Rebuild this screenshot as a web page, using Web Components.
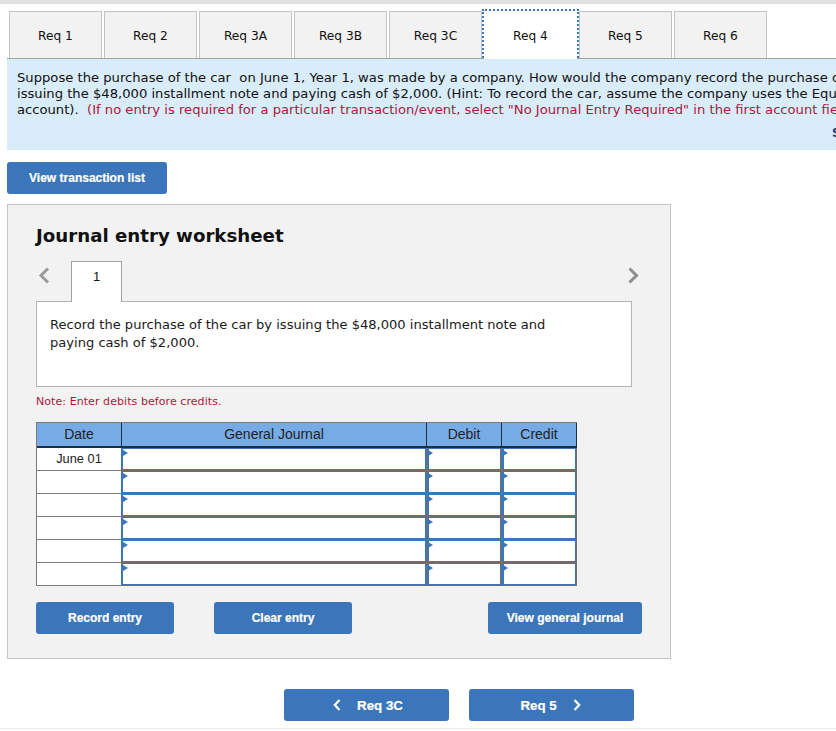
<!DOCTYPE html>
<html><head><meta charset="utf-8">
<style>
html,body{margin:0;padding:0;background:#fff;overflow:hidden;width:836px;height:731px}
body{font-family:"DejaVu Sans",Verdana,sans-serif;font-size:13px;color:#111}
</style></head><body>
<req-app></req-app>
<script>
function def(name,css,html,init){
  customElements.define(name,class extends HTMLElement{
    constructor(){super();const s=this.attachShadow({mode:'open'});s.innerHTML='<style>'+css+'</style>'+html;}
    connectedCallback(){if(init)init(this,this.shadowRoot);}
  });
}
const chev=(d)=>`<svg width="8" height="12" viewBox="0 0 8 12" fill="none" stroke="#fff" stroke-width="2.2"><path d="${d==='l'?'M6.5 1 L1.8 6 L6.5 11':'M1.5 1 L6.2 6 L1.5 11'}"/></svg>`;

def('req-tab',`
:host{display:flex;align-items:center;justify-content:center;box-sizing:border-box;width:93px;height:47px;margin-left:2px;padding-top:1px;background:#f2f2f2;border:1px solid #c4c4c4;border-bottom:0;font:12.2px "DejaVu Sans",Verdana,sans-serif;color:#111}
:host(:first-child){margin-left:0}
:host([active]){background:#fff;outline:2px dotted #3b76ba;outline-offset:0;border-color:#fff;position:relative;height:48px;margin-bottom:-1px;padding-top:0}
`,`<slot></slot>`);

def('req-tabs',`
:host{display:flex;border-bottom:1px solid #a3a3a3;margin-left:7px;padding-left:2px;width:960px}
`,`<slot></slot>`);

def('req-btn',`
:host{display:flex;align-items:center;justify-content:center;gap:16px;box-sizing:border-box;height:32px;background:#3b76ba;color:#fff;border-radius:3px;font:bold 12px "Liberation Sans",Arial,sans-serif;-webkit-text-stroke:.2px #fff}
:host([big]){font-size:13.3px;width:165px}
:host([prev]){padding-left:3px}
:host([next]){padding-right:2px}
`,`<slot></slot>`);

def('req-panel',`
:host{display:block;box-sizing:border-box;height:91px;width:960px;margin-left:7px;background:#d9ecfa;padding:11px 10px 0;font:13.15px/16px "DejaVu Sans",Verdana,sans-serif;color:#111;position:relative}
.s{position:absolute;left:825px;top:66px;color:#1b3a73;font-weight:bold;font-size:12px}
p{margin:0;white-space:nowrap}
i{font-style:normal;color:#b0173a}
`,`<p>Suppose the purchase of the car&nbsp; on June 1, Year 1, was made by a company. How would the company record the purchase of</p>
<p>issuing the $48,000 installment note and paying cash of $2,000. (Hint: To record the car, assume the company uses the Equipment</p>
<p>account).&nbsp; <i>(If no entry is required for a particular transaction/event, select "No Journal Entry Required" in the first account field.)</i></p>
<span class="s">S</span>`);

def('journal-cell',`
:host{display:block;box-sizing:border-box;height:23px;border-right:1px solid #3b76ba;border-bottom:1px solid #7b7b7b;position:relative;background:#fff;font:12.8px/22px "Liberation Sans",Arial,sans-serif;text-align:center;color:#222}
:host([input]){border-right-color:#6f6f6f;border-bottom-color:#6f6f6f;box-shadow:inset 2px 1px 0 #3b76ba, inset -1px -1px 0 #3b76ba}
:host([first]){box-shadow:inset 1px 1px 0 #3b76ba, inset -1px -1px 0 #3b76ba}
.t{display:none;position:absolute;left:1px;top:2px;width:0;height:0;border-left:5px solid #3b76ba;border-top:3px solid transparent;border-bottom:3px solid transparent}
:host([input]) .t{display:block}
`,`<span class="t"></span><slot></slot>`);

def('journal-table',`
:host{display:grid;grid-template-columns:85px 305px 75px 75px;width:541px;box-sizing:border-box;border-left:1px solid #7b7b7b;border-top:1px solid #7b7b7b}
.h{background:#77abe5;border-right:1px solid #1f2f40;border-bottom:2px solid #1f2f40;box-sizing:border-box;height:25px;padding-bottom:2px;display:flex;align-items:center;justify-content:center;font:14px "Liberation Sans",Arial,sans-serif;color:#222}
`,``,(el,s)=>{
  if(s.querySelector('.h'))return;
  for(const t of ['Date','General Journal','Debit','Credit']){const d=document.createElement('div');d.className='h';d.textContent=t;s.appendChild(d);}
  for(let r=0;r<6;r++){
    const c=document.createElement('journal-cell');c.textContent=r===0?'June 01':'';s.appendChild(c);
    for(let k=0;k<3;k++){const i=document.createElement('journal-cell');i.setAttribute('input','');if(k===0)i.setAttribute('first','');s.appendChild(i);}
  }
});

def('journal-sheet',`
:host{display:block;box-sizing:border-box;width:664px;height:455px;margin:10px 0 0 7px;background:#f2f2f2;border:1px solid #c4c4c4;padding:19px 28px 0;position:relative}
h2{margin:0;font:bold 18.2px/24px "DejaVu Sans",Verdana,sans-serif;color:#111}
.bar{display:flex;align-items:flex-start;height:41px;margin-top:13px;width:596px;justify-content:space-between;margin-bottom:-1px;position:relative;z-index:1}
.left{display:flex;align-items:flex-start}
.chev{margin:6px 0 0 2px;display:block}
.tab1{box-sizing:border-box;width:51px;height:41px;margin-left:21px;background:#fff;border:1px solid #a3a3a3;border-bottom:0;text-align:center;font:13px/30px "Liberation Sans",Arial,sans-serif;color:#111}
.task{box-sizing:border-box;width:596px;height:86px;background:#fff;border:1px solid #b4b4b4;padding:14px 13px;font:13.07px/18px "DejaVu Sans",Verdana,sans-serif;color:#1a1a1a}
.note{margin:8px 0 13px;font:11px/14px "DejaVu Sans",Verdana,sans-serif;letter-spacing:.07px;color:#b0173a}
.btns{display:flex;margin-top:16px;width:606px}
.btns req-btn{width:138px;margin-right:40px}
.btns req-btn:last-child{width:154px;margin:0 0 0 auto}
`,`<h2>Journal entry worksheet</h2>
<div class="bar"><div class="left">
<svg class="chev" width="12" height="17" viewBox="0 0 12 17" fill="none" stroke="#9a9a9a" stroke-width="3"><path d="M10 1.5 L3 8.5 L10 15.5"/></svg>
<div class="tab1">1</div></div>
<svg class="chev" style="margin-right:-7px" width="12" height="17" viewBox="0 0 12 17" fill="none" stroke="#8f8f8f" stroke-width="3"><path d="M2.5 1.5 L9.5 8.5 L2.5 15.5"/></svg>
</div>
<div class="task">Record the purchase of the car by issuing the $48,000 installment note and<br>paying cash of $2,000.</div>
<div class="note">Note: Enter debits before credits.</div>
<journal-table></journal-table>
<div class="btns"><req-btn>Record entry</req-btn><req-btn>Clear entry</req-btn><req-btn>View general journal</req-btn></div>`);

def('req-app',`
:host{display:block;width:836px;height:731px;overflow:hidden;position:relative}
.top{height:4px;background:#e0e0e0;margin-bottom:7px}
.v{width:160px;margin:12px 0 0 7px}
.nav{display:flex;gap:20px;margin:30px 0 0 284px}
.end{height:1px;background:#eee;margin-top:7px}
`,`<div class="top"></div>
<req-tabs>${['Req 1','Req 2','Req 3A','Req 3B','Req 3C','Req 4','Req 5','Req 6'].map(t=>`<req-tab${t==='Req 4'?' active':''}>${t}</req-tab>`).join('')}</req-tabs>
<req-panel></req-panel>
<req-btn class="v">View transaction list</req-btn>
<journal-sheet></journal-sheet>
<div class="nav"><req-btn big prev>${chev('l')}<span>Req 3C</span></req-btn><req-btn big next><span>Req 5</span>${chev('r')}</req-btn></div>
<div class="end"></div>`);
</script>
</body></html>
